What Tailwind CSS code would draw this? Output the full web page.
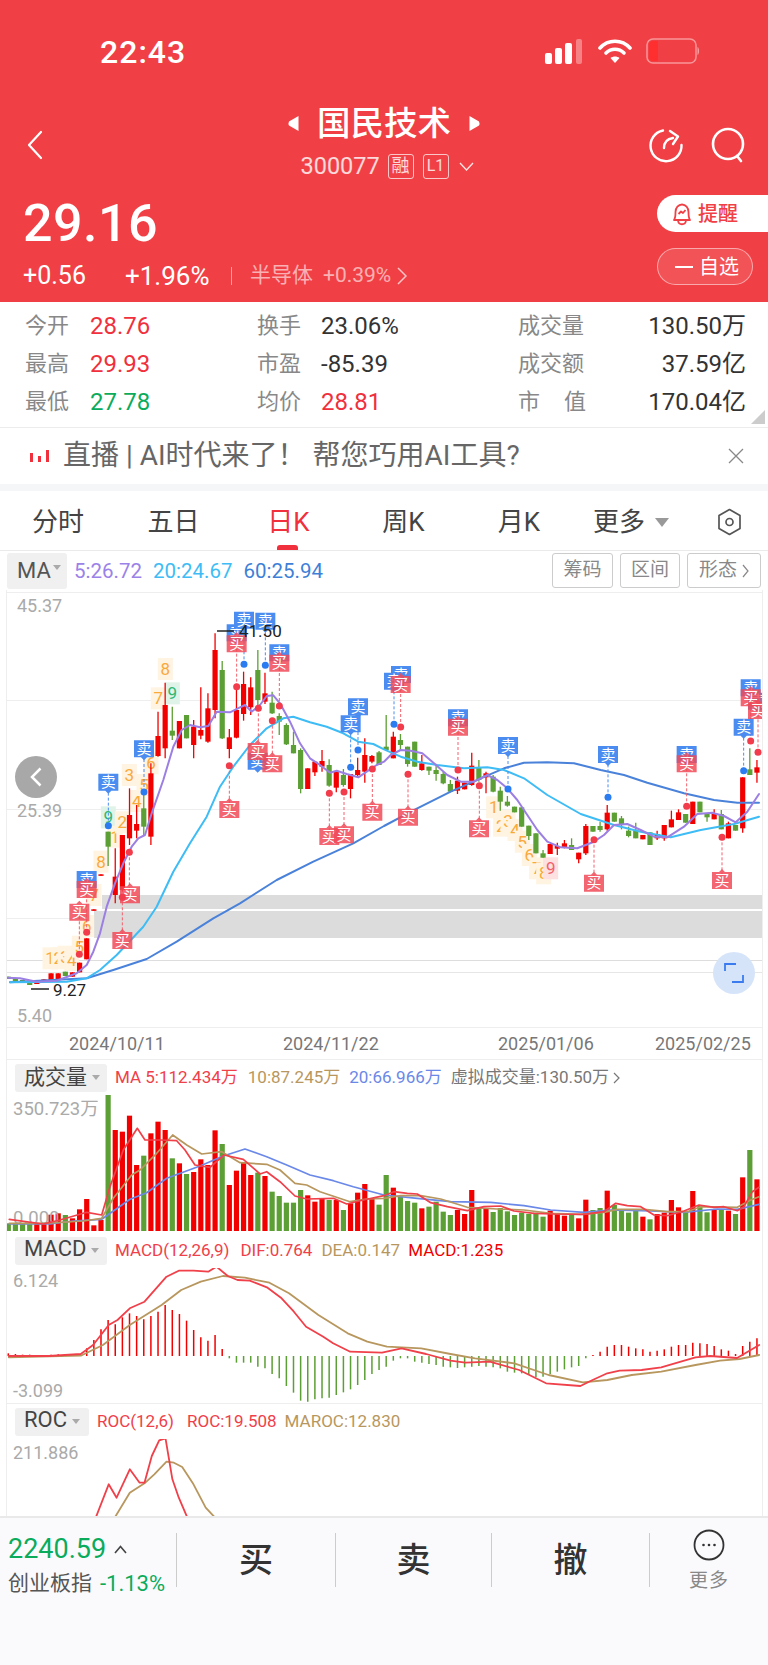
<!DOCTYPE html>
<html lang="zh-CN">
<head>
  <meta charset="UTF-8">
  <title>国民技术</title>
  <script src="https://cdn.jsdelivr.net/npm/@tailwindcss/browser@4"></script>
</head>
<body class="m-0 bg-white font-[Roboto,'Noto_Sans_CJK_SC',sans-serif]">
<div class="w-[768px] h-[1665px] overflow-hidden flex flex-col bg-white">

  <!-- header -->
  <header class="h-[302px] shrink-0 bg-[#f14045] text-white flex flex-col">
    <div class="h-[104px] shrink-0 flex items-start pt-[35px] pl-[100px] pr-[68px]">
      <div class="text-[32px] leading-[34px] font-medium tracking-[1px]">22:43</div>
      <div class="ml-auto flex items-center pt-[3px]">
        <svg width="38" height="25" viewBox="0 0 38 25"><rect x="0" y="14" width="7" height="11" rx="2" fill="#fff"/><rect x="10" y="9" width="7" height="16" rx="2" fill="#fff"/><rect x="20" y="4" width="7" height="21" rx="2" fill="#fff"/><rect x="31" y="0" width="6" height="25" rx="2" fill="#fff" fill-opacity=".35"/></svg>
        <svg class="ml-[15px]" width="34" height="25" viewBox="0 0 34 25" fill="none" stroke="#fff" stroke-width="3.6" stroke-linecap="round"><path d="M2 9C10 0 24 0 32 9"/><path d="M8 14C13 9 21 9 26 14"/><path d="M17 24l-4.500-5c2.500-2 6.500-2 9 0z" fill="#fff" stroke="none"/></svg>
        <svg class="ml-[14px]" width="54" height="26" viewBox="0 0 54 26" fill="none"><rect x="1" y="1" width="49" height="24" rx="6" stroke="#fff" stroke-opacity=".45" stroke-width="1.500"/><path d="M7 3h5v20H7a4 4 0 0 1-4-4V7a4 4 0 0 1 4-4z" fill="#ff2f2f"/><path d="M51.500 9c2 .5 2 7.500 0 8z" fill="#fff" fill-opacity=".5"/></svg>
      </div>
    </div>

    <div class="h-[82px] shrink-0 grid grid-cols-[1fr_auto_1fr] px-[26px]">
      <div class="flex items-center">
        <svg width="17" height="30" viewBox="0 0 17 30" fill="none" stroke="#fff" stroke-width="2.200" stroke-linecap="round" stroke-linejoin="round"><path d="M15 2L3 15l12 13"/></svg>
      </div>
      <div class="flex flex-col items-center">
        <div class="h-[39px] flex items-center gap-[18px] text-[33.500px] leading-[39px] font-medium">
          <svg width="11" height="15" viewBox="0 0 11 15"><path d="M10.500 0v15L1 9.500Q0 7.500 1 5.500z" fill="#fff"/></svg>
          <span>国民技术</span>
          <svg width="11" height="15" viewBox="0 0 11 15"><path d="M.5 0v15L10 9.500Q11 7.500 10 5.500z" fill="#fff"/></svg>
        </div>
        <div class="mt-[9px] h-[28px] pl-[6px] flex items-center text-white/80">
          <span class="text-[23.500px] leading-[28px] w-[87px]">300077</span>
          <span class="w-[26px] h-[25px] border border-white/70 rounded-[3px] flex items-center justify-center text-[18px] leading-none">融</span>
          <span class="ml-[9px] w-[26px] h-[25px] border border-white/70 rounded-[3px] flex items-center justify-center text-[16px] leading-none">L1</span>
          <svg class="ml-[10px]" width="15" height="9" viewBox="0 0 15 9" fill="none" stroke="#fff" stroke-opacity=".85" stroke-width="1.400"><path d="M1 1l6.500 7L14 1"/></svg>
        </div>
      </div>
      <div class="flex items-center justify-end gap-[27px] -mr-[4px]">
        <svg width="36" height="36" viewBox="0 0 36 36" fill="none" stroke="#fff" stroke-width="2.400" stroke-linecap="round" stroke-linejoin="round"><path d="M15 3.500A15.500 15.500 0 1 0 33.500 18"/><path d="M16 21c0-6 3-9 9-10"/><path d="M22 4l8 5.500-5 7.500"/></svg>
        <svg width="35" height="36" viewBox="0 0 35 36" fill="none" stroke="#fff" stroke-width="2.600" stroke-linecap="round"><circle cx="17" cy="17" r="15"/><path d="M26 29l4 5"/></svg>
      </div>
    </div>

    <div class="flex-1 flex justify-between">
      <div class="pl-[23px]">
        <div class="h-[75px] flex items-center text-[52px] leading-none tracking-[.5px] font-medium">29.16</div>
        <div class="h-[30px] flex items-center">
          <span class="text-[25px] w-[102px]">+0.56</span>
          <span class="text-[26px] w-[106px]">+1.96%</span>
          <span class="w-px h-[18px] bg-white/50"></span>
          <span class="ml-[18px] text-[21px] text-white/60">半导体</span>
          <span class="ml-[10px] text-[21px] text-white/60">+0.39%</span>
          <svg class="ml-[6px]" width="10" height="18" viewBox="0 0 10 18" fill="none" stroke="#fff" stroke-opacity=".7" stroke-width="1.500"><path d="M1 1l8 8-8 8"/></svg>
        </div>
      </div>
      <div class="w-[111px] pt-[9px] flex flex-col">
        <div class="h-[37px] bg-white rounded-l-[19px] flex items-center pl-[15px] gap-[6px] text-[#f14045] text-[20px] font-medium">
          <svg width="20" height="24" viewBox="0 0 20 24" fill="none" stroke="#f14045" stroke-width="1.800" stroke-linejoin="round"><path d="M2 18c1.500-2 1.500-5 1.500-8a6.500 7.500 0 0 1 13 0c0 3 0 6 1.500 8z"/><path d="M6 18.500c.5 5 7.500 5 8 0"/><path d="M6.500 12l2.500-2.500 2 1.500 2.500-3"/></svg>
          <span>提醒</span>
        </div>
        <div class="mt-[16px] w-[96px] h-[37px] rounded-[19px] border border-white/50 bg-white/10 flex items-center pl-[17px] gap-[6px] text-[20px]">
          <span class="w-[18px] h-[2px] bg-white"></span>
          <span>自选</span>
        </div>
      </div>
    </div>
  </header>

  <!-- quote table -->
  <section class="relative h-[125px] shrink-0 pt-[5px] pl-[25px] text-[24px] leading-[38px] text-[#333]">
    <div class="grid grid-cols-[232px_261px_228px]">
      <div class="flex"><span class="w-[65px] text-[22px] text-[#888]">今开</span><span class="text-[#f0303c]">28.76</span></div>
      <div class="flex"><span class="w-[64px] text-[22px] text-[#888]">换手</span><span>23.06%</span></div>
      <div class="flex justify-between"><span class="text-[22px] text-[#888]">成交量</span><span>130.50万</span></div>
      <div class="flex"><span class="w-[65px] text-[22px] text-[#888]">最高</span><span class="text-[#f0303c]">29.93</span></div>
      <div class="flex"><span class="w-[64px] text-[22px] text-[#888]">市盈</span><span>-85.39</span></div>
      <div class="flex justify-between"><span class="text-[22px] text-[#888]">成交额</span><span>37.59亿</span></div>
      <div class="flex"><span class="w-[65px] text-[22px] text-[#888]">最低</span><span class="text-[#0bab5c]">27.78</span></div>
      <div class="flex"><span class="w-[64px] text-[22px] text-[#888]">均价</span><span class="text-[#f0303c]">28.81</span></div>
      <div class="flex justify-between"><span class="w-[68px] flex justify-between text-[22px] text-[#888]"><span>市</span><span>值</span></span><span>170.04亿</span></div>
    </div>
    <div class="absolute right-[3px] bottom-[3px] w-0 h-0 border-l-[14px] border-l-transparent border-b-[14px] border-b-[#ccc]"></div>
  </section>

  <!-- live banner -->
  <div class="h-[57px] shrink-0 border-t border-[#ececec] flex items-center pl-[30px] pr-[24px]">
    <svg width="19" height="12" viewBox="0 0 19 12"><rect x="0" y="3" width="3" height="9" fill="#f0303c"/><rect x="8" y="6" width="3" height="6" fill="#f0303c"/><rect x="16" y="0" width="3" height="12" fill="#f0303c"/></svg>
    <span class="ml-[14px] text-[28px] leading-none text-[#666]">直播 | AI时代来了！ 帮您巧用AI工具?</span>
    <svg class="ml-auto" width="16" height="16" viewBox="0 0 16 16" fill="none" stroke="#888" stroke-width="1.300"><path d="M1 1l14 14M15 1L1 15"/></svg>
  </div>
  <div class="h-[7px] shrink-0 bg-[#f5f6f8]"></div>

  <!-- period tabs -->
  <nav class="h-[60px] shrink-0 pt-[3px] border-b border-[#eaeaea] grid grid-cols-[116px_115px_115px_115px_116px_114px_1fr] items-center text-[26px] text-[#444] relative">
    <span class="text-center">分时</span>
    <span class="text-center">五日</span>
    <span class="text-center text-[#f0303c]">日K</span>
    <span class="text-center">周K</span>
    <span class="text-center">月K</span>
    <span class="flex items-center justify-center gap-[10px] pr-[6px]">更多<span class="w-0 h-0 border-x-[7px] border-x-transparent border-t-[9px] border-t-[#999]"></span></span>
    <span class="flex justify-center">
      <svg width="25" height="28" viewBox="0 0 25 28" fill="none" stroke="#555" stroke-width="1.700"><path d="M12.500 1.500L23 7.500v13L12.500 26.500 2 20.500v-13z" stroke-linejoin="round"/><circle cx="12.500" cy="14" r="3.500"/></svg>
    </span>
    <span class="absolute left-[277px] bottom-0 w-[21px] h-[5px] rounded-t-[3px] bg-[#f0303c]"></span>
  </nav>

  <!-- MA row -->
  <div class="h-[39px] shrink-0 flex items-center pl-[7px] pr-[7px] text-[20.500px]">
    <span class="w-[60px] h-[36px] bg-[#f0f0f0] rounded-[3px] flex items-center pl-[10px] text-[#555] text-[22px]">MA<span class="ml-[2px] mb-[6px] w-0 h-0 border-x-[4px] border-x-transparent border-t-[5px] border-t-[#aaa]"></span></span>
    <span class="ml-[7px] pt-[2px] text-[#9b82e8]">5:26.72</span>
    <span class="ml-[11px] pt-[2px] text-[#3ebcf5]">20:24.67</span>
    <span class="ml-[11px] pt-[2px] text-[#3f7fd8]">60:25.94</span>
    <span class="ml-auto w-[61px] h-[35px] border border-[#ccc] rounded-[3px] flex items-center justify-center text-[19px] text-[#888]">筹码</span>
    <span class="ml-[7px] w-[60px] h-[35px] border border-[#ccc] rounded-[3px] flex items-center justify-center text-[19px] text-[#888]">区间</span>
    <span class="ml-[7px] w-[74px] h-[35px] border border-[#ccc] rounded-[3px] flex items-center justify-center gap-[5px] text-[19px] text-[#888]">形态<svg width="7" height="14" viewBox="0 0 7 14" fill="none" stroke="#888" stroke-width="1.200"><path d="M1 1l5 6-5 6"/></svg></span>
  </div>

  <!-- charts -->
  <div class="flex-1 min-h-0 ml-[6px] w-[757px] border-x border-[#eee] flex flex-col overflow-hidden">
    <div class="relative h-[469px] shrink-0">
      <svg id="kline" class="block shrink-0" width="755" height="469" viewBox="7 590 755 469"></svg>
      <div class="absolute left-[8px] top-[166px] w-[42px] h-[42px] rounded-full bg-[#a8a8a8] flex items-center justify-center">
        <svg width="12" height="20" viewBox="0 0 12 20" fill="none" stroke="#fff" stroke-width="2.500"><path d="M10.500 1.500L2 10l8.500 8.500"/></svg>
      </div>
      <div class="absolute left-[706px] top-[362px] w-[42px] h-[42px] rounded-full bg-[#d6e4fa] flex items-center justify-center">
        <svg width="20" height="20" viewBox="0 0 20 20" fill="none" stroke="#3a7cf0" stroke-width="1.800"><path d="M1 8V1h11M19 12v7H8"/></svg>
      </div>
    </div>

    <div class="h-[174px] shrink-0 border-t border-[#eee] flex flex-col">
      <div class="h-[35px] shrink-0 flex items-center pl-[8px] text-[17px] leading-none">
        <span class="w-[92px] h-[28px] bg-[#f0f0f0] rounded-[3px] flex items-center pl-[9px] gap-[5px] text-[21px] text-[#444]">成交量<span class="w-0 h-0 border-x-[4px] border-x-transparent border-t-[5px] border-t-[#aaa]"></span></span>
        <span class="ml-[8px] text-[#f0404a]">MA 5:112.434万</span>
        <span class="ml-[10px] text-[#b8975e]">10:87.245万</span>
        <span class="ml-[9px] text-[#6a88e8]">20:66.966万</span>
        <span class="ml-[9px] text-[#777]">虚拟成交量:130.50万</span>
        <svg class="ml-[4px]" width="7" height="12" viewBox="0 0 7 12" fill="none" stroke="#777" stroke-width="1.200"><path d="M1 1l5 5-5 5"/></svg>
      </div>
      <svg id="volume" class="block shrink-0" width="755" height="138" viewBox="7 1095 755 138"></svg>
    </div>

    <div class="h-[170px] shrink-0 flex flex-col">
      <div class="h-[35px] shrink-0 flex items-center pl-[8px] text-[17px] leading-none">
        <span class="w-[92px] h-[28px] bg-[#f0f0f0] rounded-[3px] flex items-center pl-[9px] pb-[3px] gap-[5px] text-[22px] text-[#444]">MACD<span class="mt-[3px] w-0 h-0 border-x-[4px] border-x-transparent border-t-[5px] border-t-[#aaa]"></span></span>
        <span class="ml-[8px] text-[#f0404a]">MACD(12,26,9)</span>
        <span class="ml-[11px] text-[#f0404a]">DIF:0.764</span>
        <span class="ml-[9px] text-[#b8975e]">DEA:0.147</span>
        <span class="ml-[8px] text-[#f00000]">MACD:1.235</span>
      </div>
      <svg id="macd" class="block shrink-0" width="755" height="135" viewBox="7 1268 755 135"></svg>
    </div>

    <div class="flex-1 min-h-0 border-t border-[#eee] flex flex-col overflow-hidden">
      <div class="h-[35px] shrink-0 flex items-center pl-[8px] text-[17px] leading-none">
        <span class="w-[74px] h-[28px] bg-[#f0f0f0] rounded-[3px] flex items-center pl-[9px] pb-[3px] gap-[5px] text-[22px] text-[#444]">ROC<span class="mt-[3px] w-0 h-0 border-x-[4px] border-x-transparent border-t-[5px] border-t-[#aaa]"></span></span>
        <span class="ml-[8px] text-[#f0404a]">ROC(12,6)</span>
        <span class="ml-[13px] text-[#f0404a]">ROC:19.508</span>
        <span class="ml-[8px] text-[#b8975e]">MAROC:12.830</span>
      </div>
      <svg id="roc" class="block shrink-0" width="755" height="78" viewBox="7 1438 755 78"></svg>
    </div>
  </div>

  <!-- bottom bar -->
  <footer class="h-[149px] shrink-0 bg-[#fafafc] border-t-2 border-[#e9e9e9] flex items-start pt-[15px]">
    <div class="w-[176px] h-[54px] pl-[8px]">
      <div class="h-[32px] flex items-center text-[27px] text-[#0bab5c]">2240.59
        <svg class="ml-[8px]" width="13" height="9" viewBox="0 0 13 9" fill="none" stroke="#444" stroke-width="1.600"><path d="M1 8l5.500-6.500L12 8"/></svg>
      </div>
      <div class="h-[32px] pt-[5px] flex items-center"><span class="text-[21px] text-[#555]">创业板指</span><span class="ml-[8px] text-[22px] text-[#0bab5c]">-1.13%</span></div>
    </div>
    <div class="w-[159px] h-[54px] border-l border-[#ccc] flex items-center justify-center text-[34px] font-medium text-[#333]">买</div>
    <div class="w-[156px] h-[54px] border-l border-[#ccc] flex items-center justify-center text-[34px] font-medium text-[#333]">卖</div>
    <div class="w-[158px] h-[54px] border-l border-[#ccc] flex items-center justify-center text-[34px] font-medium text-[#333]">撤</div>
    <div class="w-[119px] h-[54px] border-l border-[#ccc] flex flex-col items-center">
      <svg class="-mt-[4px] shrink-0" width="32" height="32" viewBox="0 0 32 32" fill="none"><circle cx="16" cy="16" r="14.500" stroke="#333" stroke-width="1.800"/><circle cx="10.500" cy="16" r="1.300" fill="#333"/><circle cx="16" cy="16" r="1.300" fill="#333"/><circle cx="21.500" cy="16" r="1.300" fill="#333"/></svg>
      <span class="mt-[8px] text-[19px] leading-[24px] tracking-[1px] text-[#888]">更多</span>
    </div>
  </footer>
</div>

<script>
  // chart data is in reference-crop units: x/3, 590+y/3
  const RED = '#f20000', GREEN = '#5c9f34', SELL = '#4a8cf0', BUY = '#f4606c';
  const barX = i => 8.3 + 7.13 * i;

  // high, low, body top, body bottom, colour
  const candles = [
    [1160,1167,1160,1167,'g'],[1167,1173,1167,1173,'g'],[1170,1175,1170,1175,'g'],[1178,1185,1178,1185,'g'],
    [1172,1182,1175,1182,'r'],[1168,1175,1168,1175,'r'],[1150,1172,1150,1172,'r'],[1150,1168,1150,1168,'r'],
    [1145,1158,1145,1158,'g'],[1147,1160,1147,1160,'r'],[1118,1147,1118,1147,'r'],[1045,1108,1045,1108,'r'],
    [958,962,958,962,'r'],[853,857,853,857,'r'],[725,828,725,770,'g'],[775,940,860,915,'r'],
    [735,905,735,900,'r'],[595,765,675,745,'r'],[645,745,702,722,'r'],[610,735,655,710,'g'],
    [520,765,550,740,'r'],[365,500,438,498,'r'],[278,505,345,475,'r'],[350,450,422,437,'g'],
    [393,475,393,475,'r'],[375,445,375,445,'g'],[390,505,410,465,'r'],[292,448,420,437,'r'],
    [310,458,355,455,'r'],[130,385,180,360,'r'],[213,447,240,445,'g'],[417,505,442,477,'r'],
    [300,445,360,443,'r'],[245,392,282,372,'r'],[262,375,292,352,'r'],[180,350,240,330,'g'],
    [248,342,310,335,'r'],[305,372,338,370,'g'],[370,435,378,395,'g'],[400,465,405,463,'g'],
    [425,490,465,490,'g'],[475,610,480,597,'g'],[535,597,535,597,'r'],[515,558,515,547,'r'],
    [480,545,513,530,'r'],[508,590,525,587,'g'],[545,607,545,593,'r'],[537,590,555,585,'g'],
    [552,625,552,597,'r'],[503,560,540,555,'r'],[445,578,495,545,'r'],[495,520,498,515,'r'],
    [483,525,487,525,'g'],[375,480,470,480,'g'],[425,505,440,505,'r'],[432,480,450,465,'g'],
    [470,530,470,522,'g'],[455,530,455,530,'g'],[495,542,520,540,'r'],[530,555,530,542,'g'],
    [522,572,540,552,'g'],[545,583,552,580,'g'],[570,607,582,605,'g'],[560,612,572,602,'r'],
    [578,598,578,598,'r'],[488,587,527,585,'r'],[510,575,533,570,'g'],[545,610,550,562,'r'],
    [555,607,560,605,'g'],[590,662,602,635,'g'],[618,650,635,647,'g'],[650,667,650,667,'g'],
    [652,710,652,710,'g'],[707,750,707,738,'g'],[730,790,730,790,'g'],[780,803,790,803,'g'],
    [762,792,762,792,'r'],[758,795,768,776,'r'],[750,775,760,773,'r'],[745,780,765,780,'g'],
    [788,820,788,808,'r'],[702,795,708,790,'r'],[708,725,708,725,'g'],[695,725,708,720,'g'],
    [645,722,668,718,'r'],[668,695,668,695,'g'],[678,718,685,705,'g'],[710,742,722,738,'g'],
    [698,745,722,745,'g'],[735,748,735,748,'r'],[727,765,727,765,'g'],[722,750,732,745,'r'],
    [705,752,705,745,'r'],[662,712,688,712,'r'],[658,690,667,690,'r'],[672,698,672,698,'g'],
    [635,702,635,702,'r'],[635,667,635,667,'g'],[672,695,672,682,'g'],[658,688,670,688,'r'],
    [660,718,672,718,'g'],[695,745,700,745,'r'],[705,722,705,722,'g'],[562,728,562,715,'r'],
    [475,555,538,555,'g'],[510,578,532,548,'r']
  ];

  // lines: crop coordinates of the left half, then of the right half
  const right = pts => pts.map(([x, y]) => [x + 1152, y]);
  const ma5 = [[20,1163],[60,1165],[110,1175],[170,1172],[230,1150],[260,1125],[280,1085],[300,1030],[320,950],[345,880],[370,820],[395,770],[415,745],[435,735],[455,670],[490,570],[520,470],[545,420],[570,405],[600,412],[625,408],[650,365],[690,367],[720,352],[735,345],[755,365],[780,345],[800,318],[820,316],[840,340],[870,395],[900,460],[930,505],[960,525],[990,548],[1010,542],[1040,552],[1075,562],[1100,545],[1130,525]]
    .concat(right([[0,515],[20,495],[50,480],[80,482],[115,490],[150,520],[190,555],[230,575],[270,575],[310,555],[340,570],[370,595],[400,630],[430,675],[460,720],[490,755],[530,772],[580,775],[630,755],[660,735],[690,705],[730,702],[770,720],[810,740],[850,742],[900,710],[940,672],[985,668],[1020,678],[1055,697],[1090,665],[1125,612]]));
  const ma20 = [[30,1177],[200,1175],[260,1165],[300,1140],[350,1095],[430,1010],[470,950],[520,845],[570,760],[620,680],[660,590],[700,530],[750,465],[800,415],[850,385],[880,380],[930,397],[980,410],[1030,430],[1075,455],[1120,462]]
    .concat(right([[0,478],[50,500],[100,515],[160,525],[240,535],[310,532],[360,540],[420,565],[490,615],[590,672],[690,705],[770,725],[860,742],[950,720],[1050,702],[1125,680]]));
  const ma60 = [[30,1177],[260,1165],[340,1140],[440,1107],[530,1055],[640,985],[720,940],[830,870],[940,815],[1060,760]]
    .concat(right([[0,708],[100,655],[200,605],[290,565],[360,535],[420,518],[490,517],[570,520],[650,540],[720,555],[790,578],[900,610],[990,630],[1060,638],[1125,638]]));

  const sellTags = [[325,578],[432,478],[260,870],[710,130],[732,92],[796,95],[838,190],[773,515],[1074,352],[1052,403]]
    .concat(right([[51,255],[30,275],[222,385],[372,468],[672,495],[908,495],[1100,295],[1079,413],[1122,335]]));
  const buyTags = [[710,160],[838,218],[688,657],[773,483],[817,520],[988,738],[1032,733],[1117,665],[390,913],[367,1050],[238,965],[260,897]]
    .concat(right([[50,282],[72,680],[222,410],[285,715],[630,878],[908,520],[1014,870],[1100,322],[1122,360]]));
  // dot, then the tag its dashed line runs to
  const sellDots = [[732,223,92],[796,226,95],[432,606,478],[325,707,578],[1052,532,403],[1074,480,352],[1182,403,275],[1524,597,468],[1824,622,495],[2231,542,413]];
  const buyDots = [[710,290,160],[688,527,657],[775,355,483],[817,392,520],[838,348,218],[988,610,738],[1032,606,733],[1117,537,665],[388,787,913],[367,922,1050],[238,1093,965],[260,1027,897],[1202,411,282],[1224,553,680],[1374,540,410],[1438,587,715],[1782,749,878],[2060,649,520],[2166,742,870],[2252,453,322],[2274,487,360]];

  const nineLabels = [['1',150,1105],['2',175,1105],['3',195,1100],['4',215,1110],['5',238,1070],['6',260,1008],['7',282,915],['8',303,815],['9',325,682,'g'],['1',345,740],['2',367,697],['3',388,555],['4',410,633],['5',432,585],['6',453,520],['7',475,325],['8',496,237],['9',517,310,'g'],
    ['1',1481,652],['2',1502,707],['3',1524,693],['4',1545,720],['5',1567,755],['6',1588,795],['7',1610,835],['8',1631,850],['9',1652,835,'r']];

  const px = x => x / 3;
  const py = y => 590 + y / 3;
  const line = (pts, color, w) => `<polyline fill="none" stroke="${color}" stroke-width="${w}" stroke-linejoin="round" stroke-linecap="round" points="${pts.map(([x, y]) => x.toFixed(1) + ',' + y.toFixed(1)).join(' ')}"/>`;
  const label = (text, x, y, color, size) => `<text x="${x}" y="${y}" fill="${color}" font-size="${size}" dominant-baseline="central">${text}</text>`;
  const hLine = (y, color) => `<line x1="7" x2="762" y1="${y}" y2="${y}" stroke="${color}" stroke-width="1"/>`;

  function drawKline() {
    let s = '';
    s += hLine(592.5, '#eee') + hLine(700.5, '#eee') + hLine(809.5, '#eee') + hLine(918.5, '#eee') + hLine(960.5, '#ddd') + hLine(972.5, '#e6e6e6') + hLine(1027.5, '#eee');
    s += '<rect x="102" y="895" width="660" height="14" fill="#dcdcdc"/><rect x="94" y="911" width="668" height="27" fill="#dcdcdc"/>';

    nineLabels.forEach(([t, x, y, kind]) => {
      const bg = kind === 'g' ? '#dff3e8' : kind === 'r' ? '#fde0e0' : '#fff3e2';
      const fg = kind === 'g' ? '#2fb874' : kind === 'r' ? '#f4606c' : '#f9a93b';
      s += `<rect x="${px(x) - 7.5}" y="${py(y) - 11}" width="15" height="22" fill="${bg}"/>`;
      s += `<text x="${px(x)}" y="${py(y)}" fill="${fg}" font-size="17" text-anchor="middle" dominant-baseline="central">${t}</text>`;
    });

    candles.forEach(([hi, lo, top, bot, c], i) => {
      const color = c === 'r' ? RED : GREEN, x = barX(i);
      s += `<line x1="${x}" x2="${x}" y1="${py(hi)}" y2="${py(lo)}" stroke="${color}" stroke-width="1.300"/>`;
      s += `<rect x="${x - 2.6}" y="${py(top)}" width="5.2" height="${Math.max((bot - top) / 3, 1.5)}" fill="${color}"/>`;
    });

    const conv = pts => pts.map(([x, y]) => [px(x), py(y)]);
    s += line(conv(ma60), '#4a82da', 2) + line(conv(ma20), '#3ebcf5', 2) + line(conv(ma5), '#9b7fe3', 2);

    sellDots.forEach(([x, y, tag]) => { s += `<line x1="${px(x)}" x2="${px(x)}" y1="${py(y)}" y2="${py(tag)}" stroke="${SELL}" stroke-dasharray="3 2"/>`; });
    buyDots.forEach(([x, y, tag]) => { s += `<line x1="${px(x)}" x2="${px(x)}" y1="${py(y)}" y2="${py(tag)}" stroke="${BUY}" stroke-dasharray="3 2"/>`; });

    sellTags.forEach(([x, y]) => {
      const cx = px(x), cy = py(y);
      s += `<path d="M${cx - 10} ${cy - 9}h20v17h-7l-3 3-3-3h-7z" fill="${SELL}"/>`;
      s += `<text x="${cx}" y="${cy - .5}" fill="#fff" font-size="15" text-anchor="middle" dominant-baseline="central">卖</text>`;
    });
    buyTags.forEach(([x, y]) => {
      const cx = px(x), cy = py(y);
      s += `<path d="M${cx - 10} ${cy - 8}h7l3-3 3 3h7v17h-20z" fill="#f04a58" fill-opacity=".85"/>`;
      s += `<text x="${cx}" y="${cy + .5}" fill="#fff" font-size="15" text-anchor="middle" dominant-baseline="central">买</text>`;
    });

    sellDots.forEach(([x, y]) => { s += `<circle cx="${px(x)}" cy="${py(y)}" r="3.500" fill="#2a7cf0"/>`; });
    buyDots.forEach(([x, y]) => { s += `<circle cx="${px(x)}" cy="${py(y)}" r="3.500" fill="#f23c4c"/>`; });

    s += '<line x1="217" x2="234" y1="631" y2="631" stroke="#222" stroke-width="1.500"/>' + label('41.50', 239, 631, '#222', 17);
    s += '<line x1="31" x2="49" y1="989" y2="989" stroke="#222" stroke-width="1.500"/>' + label('9.27', 53, 990, '#222', 17);
    s += label('45.37', 17, 605, '#aaa', 18) + label('25.39', 17, 810, '#aaa', 18) + label('5.40', 17, 1015, '#aaa', 18);
    s += label('2024/10/11', 69, 1043, '#777', 18) + label('2024/11/22', 283, 1043, '#777', 18) + label('2025/01/06', 498, 1043, '#777', 18) + label('2025/02/25', 655, 1043, '#777', 18);
    document.getElementById('kline').innerHTML = s;
  }

  const volTops = [[520,'g'],[522,'g'],[522,'g'],[518,'g'],[522,'r'],[522,'r'],[494,'r'],[490,'r'],[495,'g'],[505,'r'],[478,'r'],[447,'r'],[526,'r'],[510,'r'],[132,'g'],[240,'r'],[245,'r'],[197,'r'],[345,'r'],[317,'g'],[250,'r'],[215,'r'],[240,'r'],[325,'g'],[340,'r'],[372,'g'],[366,'r'],[328,'r'],[345,'r'],[241,'r'],[282,'g'],[405,'r'],[362,'r'],[338,'r'],[375,'r'],[368,'g'],[378,'r'],[425,'g'],[438,'g'],[458,'g'],[458,'g'],[420,'g'],[436,'r'],[455,'r'],[447,'r'],[450,'g'],[450,'r'],[480,'g'],[460,'r'],[428,'r'],[402,'r'],[447,'r'],[464,'g'],[375,'g'],
    [413,'r'],[440,'g'],[453,'g'],[458,'g'],[475,'r'],[470,'g'],[455,'g'],[485,'g'],[495,'g'],[480,'r'],[492,'r'],[420,'r'],[472,'g'],[475,'r'],[486,'g'],[474,'g'],[484,'g'],[495,'g'],[488,'g'],[492,'g'],[488,'g'],[500,'g'],[482,'r'],[490,'r'],[497,'r'],[495,'g'],[505,'r'],[449,'r'],[480,'g'],[474,'g'],[422,'r'],[465,'g'],[483,'g'],[488,'g'],[483,'g'],[500,'r'],[508,'g'],[492,'r'],[488,'r'],[450,'r'],[472,'r'],[485,'g'],[423,'r'],[468,'g'],[487,'g'],[480,'r'],[478,'g'],[482,'r'],[492,'g'],[382,'r'],[300,'g'],[388,'r']];
  const volMa5 = [[28,508],[130,522],[180,510],[260,487],[305,495],[330,410],[370,300],[412,235],[435,270],[480,270],[530,272],[555,300],[585,345],[630,352],[672,315],[730,328],[780,372],[800,365],[840,395],[885,438],[920,447],[1000,445],[1040,462],[1090,450]]
    .concat(right([[0,437],[30,425],[70,430],[100,432],[140,458],[190,470],[250,482],[300,470],[350,468],[390,483],[450,490],[510,492],[600,493],[660,485],[695,460],[730,467],[770,470],[810,495],[850,497],[900,483],[945,465],[990,472],[1020,470],[1060,482],[1080,470],[1105,425],[1125,412]]));
  const volMa10 = [[28,520],[130,520],[250,513],[305,505],[340,445],[395,375],[420,360],[470,310],[518,255],[560,285],[605,312],[665,305],[720,338],[800,343],[840,360],[885,400],[920,405],[960,425],[1050,455],[1100,447]]
    .concat(right([[0,445],[50,437],[110,437],[170,447],[250,472],[340,477],[420,480],[500,490],[590,493],[660,487],[700,478],[780,478],[850,485],[910,485],[950,470],[1060,472],[1100,450],[1125,440]]));
  const volMa20 = [[28,522],[150,522],[220,513],[305,508],[390,448],[440,428],[500,385],[600,348],[670,318],[735,297],[800,320],[860,345],[930,375],[1000,392],[1060,410]]
    .concat(right([[0,435],[100,445],[200,455],[320,457],[420,467],[500,480],[600,487],[680,480],[800,483],[900,487],[1000,477],[1060,478],[1125,463]]));

  function drawVolume() {
    const vy = y => 1050 + y / 3;
    let s = '';
    volTops.forEach(([top, c], i) => {
      s += `<rect x="${barX(i) - 2.6}" y="${vy(top)}" width="5.2" height="${1231 - vy(top)}" fill="${c === 'r' ? RED : GREEN}"/>`;
    });
    s += label('350.723万', 13, 1109, '#aaa', 18.5) + label('0.000', 13, 1218, '#aaa', 18.5);
    const conv = pts => pts.map(([x, y]) => [x / 3, vy(y)]);
    s += line(conv(volMa20), '#6a88e8', 1.7) + line(conv(volMa10), '#b8975e', 1.7) + line(conv(volMa5), '#f0404a', 1.7);
    document.getElementById('volume').innerHTML = s;
  }

  // MACD and ROC were read from a crop stretched 2.04x across and 3x down
  const mx = x => x / 2.0417;
  const my = y => 1230 + y / 3;
  const hist = [370,372,374,374,375,375,374,373,373,372,372,355,330,298,270,283,262,250,258,268,258,245,225,240,252,272,300,322,332,315,357,
    385,398,398,398,410,415,432,445,468,488,512,515,508,505,503,495,487,478,465,450,432,420,410,392,385,385,395,398,402,405,410,412,414,412,410,408,410,412,415,425,428,430,435,442,440,432,425,418,412,408,385,
    375,365,350,345,345,350,355,358,365,362,358,350,345,345,338,340,342,348,358,362,372,348,335,325];
  const dif = [[18,378],[100,378],[165,372],[190,345],[222,285],[240,270],[265,235],[295,215],[340,140],[365,122],[395,122],[425,125],[442,110],[465,138],[485,150],[510,152],[545,172],[575,205],[600,245],[625,290],[660,320],[680,340],[715,365],[780,368],[820,355],[870,372],[920,392],[950,398],[1000,395],[1060,420],[1115,460],[1185,468],[1210,450],[1240,430],[1265,422],[1310,420],[1350,412],[1390,395],[1420,382],[1450,378],[1505,384],[1550,345]];
  const dea = [[18,382],[165,377],[210,345],[265,285],[330,225],[370,180],[410,155],[455,138],[500,143],[550,158],[590,190],[650,255],[710,310],[750,335],[790,350],[860,355],[920,372],[970,385],[1050,400],[1120,435],[1190,457],[1240,450],[1290,435],[1350,425],[1420,405],[1470,392],[1510,387],[1550,375]];
  const rocLine = [[196,858],[222,760],[238,800],[265,715],[285,755],[295,755],[310,675],[325,628],[338,622],[352,745],[365,800],[382,858]];
  const rocMa = [[235,858],[265,785],[295,757],[315,730],[340,692],[355,695],[372,708],[395,760],[420,830],[438,858]];

  function drawMacd() {
    const conv = pts => pts.map(([x, y]) => [mx(x), my(y)]);
    const base = my(378);
    let s = '';
    hist.forEach((top, i) => {
      const color = top < 378 ? RED : GREEN;
      s += `<line x1="${barX(i)}" x2="${barX(i)}" y1="${base}" y2="${my(top)}" stroke="${color}" stroke-width="1.500"/>`;
    });
    s += line(conv(dea), '#b8975e', 1.8) + line(conv(dif), '#f0404a', 1.8);
    s += label('6.124', 13, 1280, '#aaa', 18) + label('-3.099', 13, 1390, '#aaa', 18);
    document.getElementById('macd').innerHTML = s;

    let r = label('211.886', 13, 1451, '#aaa', 18);
    r += line(conv(rocMa), '#b8975e', 1.8) + line(conv(rocLine), '#f0404a', 1.8);
    document.getElementById('roc').innerHTML = r;
  }

  drawKline();
  drawVolume();
  drawMacd();
</script>
</body>
</html>
